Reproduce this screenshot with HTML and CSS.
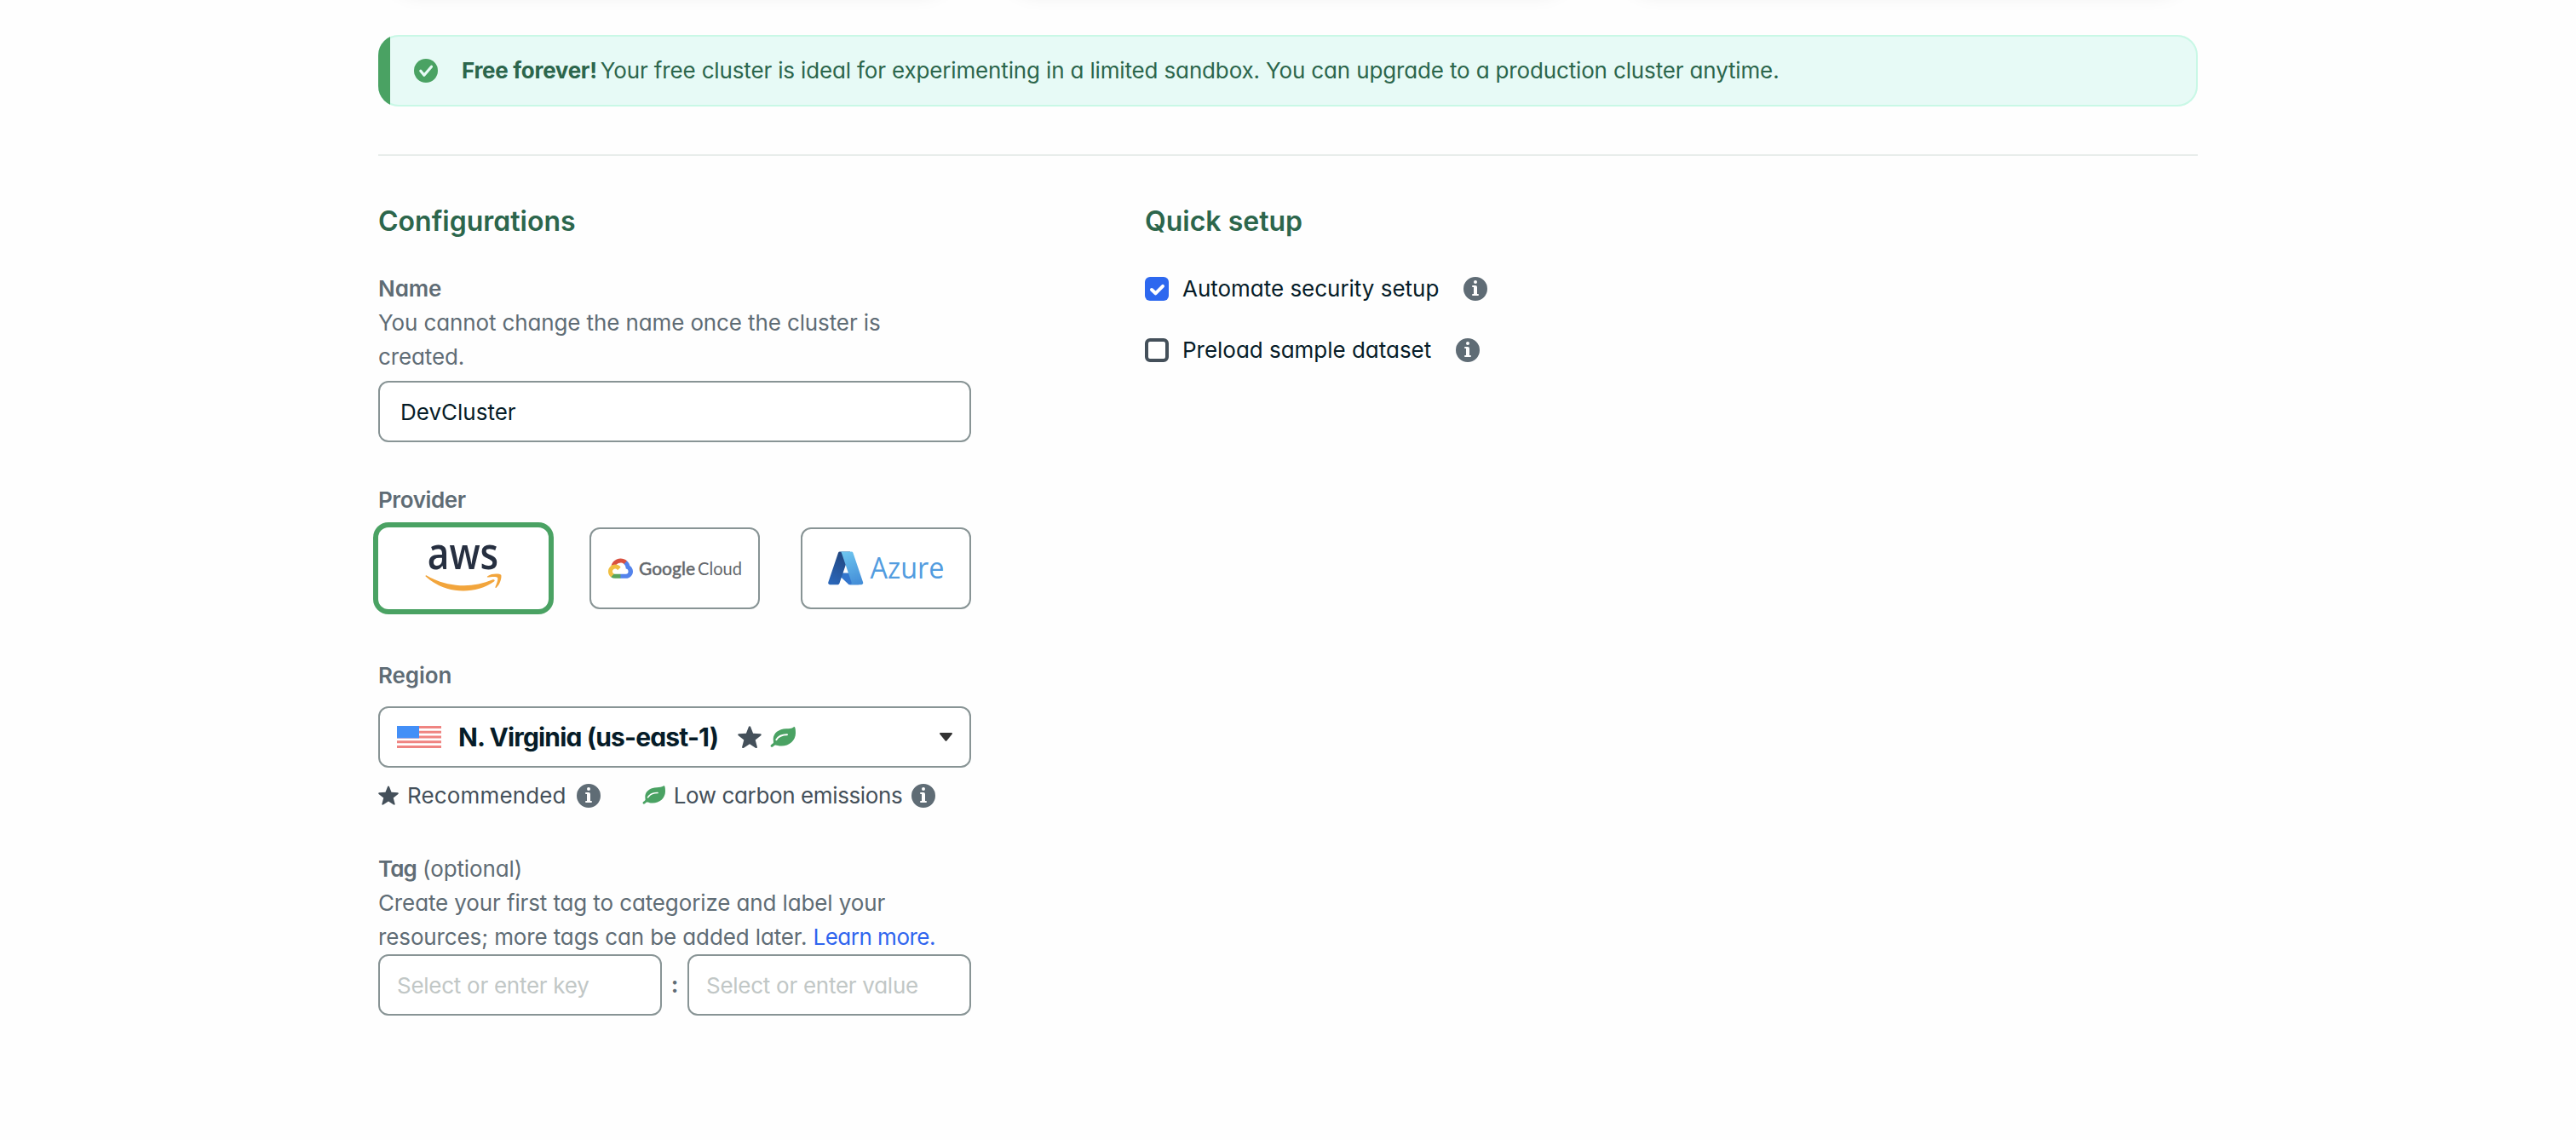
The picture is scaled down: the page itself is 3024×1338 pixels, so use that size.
FILE: index.html
```html
<!DOCTYPE html>
<html lang="en">
<head>
    <meta charset="UTF-8">
    <meta name="viewport" content="width=device-width, initial-scale=1.0">
    <title>Create a Cluster</title>
    <link rel="stylesheet" href="styles.css">
</head>
<body>
    <!-- Shared icons -->
    <svg class="sprite" aria-hidden="true">
        <symbol id="icon-info" viewBox="1 1 14 14">
            <path fill-rule="evenodd" d="M8 15A7 7 0 1 0 8 1a7 7 0 0 0 0 14ZM9 4a1 1 0 1 1-2 0 1 1 0 0 1 2 0ZM8 6a1 1 0 0 1 1 1v4h.5a.5.5 0 0 1 0 1h-3a.5.5 0 0 1 0-1H7V7h-.5a.5.5 0 0 1 0-1H8Z"/>
        </symbol>
        <symbol id="icon-star" viewBox="0 0 28 26">
            <path d="M13 .8c.4-.9 1.6-.9 2 0l3.1 7.9 8.6.6c1 .1 1.4 1.200.6 1.900l-6.600 5.300 2.200 8.200c.2 1-.8 1.700-1.700 1.200L14 21.300l-7.200 4.600c-.9.5-1.900-.2-1.700-1.200l2.200-8.200L.7 11.200C-.1 10.500.300 9.400 1.300 9.300l8.600-.6z"/>
        </symbol>
        <symbol id="icon-leaf" viewBox="0 0 30 24">
            <path d="M29.200.7c-.4-.9-1.100-.8-1.700-.3C25.500 2 22.500 2.200 19 2.300 10 2.600 3.800 7.500 3.700 14.500c0 1.800.5 3.300.2 4.300-.4 1-2 1.500-3 2.700-1 1.300.5 2.900 1.900 2.200 1.200-.7 1.700-2 3.200-2.300 1.500-.2 3.500 1.200 7.500 1.200C22.500 22.500 30 16 30 7.500 30 4.500 29.800 2.200 29.200.7Z"/>
            <path class="leaf-vein" d="M7.300 15.200C9.500 11.500 14 9.200 20 9.200"/>
        </symbol>
    </svg>

    <div class="page">
        <!-- Cluster tier cards, scrolled off the top -->
        <div class="tiers">
            <div class="tier-card"></div>
            <div class="tier-card"></div>
            <div class="tier-card"></div>
        </div>

        <div class="banner">
            <svg class="banner-icon" viewBox="0 0 28 28">
                <circle cx="14" cy="14" r="14"/>
                <path d="M7.800 14.200l4.100 5 8.600-10"/>
            </svg>
            <p class="banner-text"><b>Free forever!</b> Your free cluster is ideal for experimenting in a limited sandbox. You can upgrade to a production cluster anytime.</p>
        </div>

        <hr class="divider">

        <div class="columns">
            <form class="config">
                <h2>Configurations</h2>

                <!-- Name -->
                <div class="field field-name">
                    <label class="label" for="name">Name</label>
                    <p class="description">You cannot change the name once the cluster is created.</p>
                    <input class="input" id="name" type="text" value="DevCluster">
                </div>

                <!-- Provider -->
                <div class="field field-provider">
                    <span class="label tight">Provider</span>
                    <div class="providers">
                        <button type="button" class="provider selected" aria-label="AWS">
                            <svg class="logo-aws" viewBox="0 0 304 182">
                                <text class="aws-word" x="9" y="94" textLength="282" lengthAdjust="spacingAndGlyphs">aws</text>
                                <path fill="#f2a53c" d="M273.500 143.700c-32.900 24.300-80.700 37.200-121.800 37.200-57.600 0-109.500-21.300-148.700-56.700-3.100-2.800-.3-6.600 3.400-4.400 42.400 24.600 94.700 39.500 148.800 39.500 36.500 0 76.600-7.600 113.500-23.200 5.500-2.500 10.200 3.600 4.800 7.600z"/>
                                <path fill="#f2a53c" d="M287.200 128.100c-4.200-5.400-27.800-2.600-38.500-1.300-3.200.4-3.700-2.400-.8-4.500 18.800-13.200 49.700-9.400 53.300-5 3.600 4.500-1 35.400-18.600 50.200-2.700 2.300-5.300 1.100-4.100-1.900 4-9.900 12.900-32.200 8.700-37.500z"/>
                            </svg>
                        </button>
                        <button type="button" class="provider" aria-label="Google Cloud">
                            <svg class="logo-gcp" viewBox="0 0 156 32">
                                <g transform="translate(0 4.500) scale(.1133)">
                                    <path fill="#d95140" d="M170.250 56.820l22.250-22.250 1.490-9.370C153.440-11.680 88.980-7.500 52.420 33.920 42.270 45.420 34.730 59.760 30.720 74.570l7.970-1.120 44.500-7.340 3.440-3.510c19.800-21.750 53.270-24.670 76.130-6.170z"/>
                                    <path fill="#5383ec" d="M224.200 73.920a100.250 100.250 0 0 0-30.210-48.720l-31.230 31.230a55.520 55.520 0 0 1 20.370 44.040v5.540a27.800 27.800 0 0 1 0 55.280h-55.670l-5.460 5.930v33.340l5.460 5.240h55.670c39.930.31 72.550-31.500 72.870-71.430.18-24.200-11.750-46.890-31.800-60.450z"/>
                                    <path fill="#58a55c" d="M71.870 205.800h55.590v-44.510H71.870a27.600 27.600 0 0 1-11.400-2.500l-7.890 2.420-22.400 22.260-1.960 7.570a72.200 72.200 0 0 0 43.650 14.760z"/>
                                    <path fill="#f1bf42" d="M71.870 61.430C31.940 61.660-.24 94.230 0 134.160a72.300 72.300 0 0 0 28.220 56.880l32.250-32.250a27.800 27.800 0 1 1 36.780-36.770l32.240-32.250a72.200 72.200 0 0 0-57.620-28.340z"/>
                                </g>
                                <text class="gcp-google" x="36" y="23.500" textLength="66" lengthAdjust="spacingAndGlyphs">Google</text>
                                <text class="gcp-cloud" x="105" y="23.500" textLength="52" lengthAdjust="spacingAndGlyphs">Cloud</text>
                            </svg>
                        </button>
                        <button type="button" class="provider" aria-label="Azure">
                            <svg class="logo-azure" viewBox="0 0 136 40">
                                <defs>
                                    <linearGradient id="az-left" x1=".7" y1="0" x2=".3" y2="1">
                                        <stop offset="0" stop-color="#21457d"/>
                                        <stop offset="1" stop-color="#2a66b8"/>
                                    </linearGradient>
                                    <linearGradient id="az-right" x1=".3" y1="0" x2=".6" y2="1">
                                        <stop offset="0" stop-color="#6cc4ef"/>
                                        <stop offset="1" stop-color="#458fd8"/>
                                    </linearGradient>
                                </defs>
                                <g transform="translate(-1.700 -2.600) scale(.467)">
                                    <path fill="#3376cd" d="M71.175 60.261h-41.290a1.911 1.911 0 0 0-1.305 3.309l26.532 24.764a4.171 4.171 0 0 0 2.846 1.121h23.380z"/>
                                    <path fill="url(#az-left)" d="M33.338 6.544h26.038l-27.030 80.087a4.152 4.152 0 0 1-3.933 2.824H8.149a4.145 4.145 0 0 1-3.928-5.470L29.404 9.368a4.152 4.152 0 0 1 3.934-2.825z"/>
                                    <path fill="url(#az-right)" d="M66.595 9.364a4.145 4.145 0 0 0-3.928-2.820H33.648a4.146 4.146 0 0 1 3.928 2.820l25.184 74.620a4.146 4.146 0 0 1-3.928 5.472h29.020a4.146 4.146 0 0 0 3.927-5.472z"/>
                                </g>
                                <text class="azure-word" x="49.500" y="31.600" textLength="87" lengthAdjust="spacingAndGlyphs">Azure</text>
                            </svg>
                        </button>
                    </div>
                </div>

                <!-- Region -->
                <div class="field field-region">
                    <span class="label">Region</span>
                    <div class="select">
                        <svg class="flag" viewBox="0 0 52 26">
                            <rect width="52" height="26" fill="#fff"/>
                            <path fill="#ef8481" d="M0 0h52v2.900H0zM0 5.800h52v2.900H0zM0 11.600h52v2.900H0zM0 17.300h52v2.900H0zM0 23.100h52V26H0z"/>
                            <rect width="26" height="14.400" fill="#438ff7"/>
                        </svg>
                        <span class="region-name">N. Virginia (us-east-1)</span>
                        <svg class="star"><use href="#icon-star"/></svg>
                        <svg class="leaf"><use href="#icon-leaf"/></svg>
                        <svg class="caret" viewBox="0 0 15 10">
                            <path d="M1 0h13c.9 0 1.300.9.800 1.500L8.300 9.500c-.4.600-1.200.600-1.600 0L.2 1.500C-.3.900.100 0 1 0z"/>
                        </svg>
                    </div>
                    <div class="legend">
                        <svg class="star small"><use href="#icon-star"/></svg>
                        <span class="legend-text">Recommended</span>
                        <svg class="info"><use href="#icon-info"/></svg>
                        <svg class="leaf small"><use href="#icon-leaf"/></svg>
                        <span class="legend-text tight">Low carbon emissions</span>
                        <svg class="info"><use href="#icon-info"/></svg>
                    </div>
                </div>

                <!-- Tag -->
                <div class="field field-tag">
                    <p class="description"><b>Tag</b> (optional)</p>
                    <p class="description">Create your first tag to categorize and label your resources; more tags can be added later. <a href="#">Learn more.</a></p>
                    <div class="tag-row">
                        <input class="input" type="text" placeholder="Select or enter key">
                        <span class="colon">:</span>
                        <input class="input" type="text" placeholder="Select or enter value">
                    </div>
                </div>
            </form>

            <div class="quick-setup">
                <h2>Quick setup</h2>
                <div class="check-row">
                    <svg class="checkbox checked" viewBox="0 0 28 28">
                        <rect width="28" height="28" rx="6"/>
                        <path d="M8 15l4.500 4.300L21 10.800"/>
                    </svg>
                    <span class="check-label">Automate security setup</span>
                    <svg class="info"><use href="#icon-info"/></svg>
                </div>
                <div class="check-row">
                    <svg class="checkbox" viewBox="0 0 28 28">
                        <rect x="2" y="2" width="24" height="24" rx="4"/>
                    </svg>
                    <span class="check-label">Preload sample dataset</span>
                    <svg class="info"><use href="#icon-info"/></svg>
                </div>
            </div>
        </div>
    </div>
</body>
</html>
```
FILE: styles.css
```css
* {
    margin: 0;
    padding: 0;
    box-sizing: border-box;
}

body {
    font-family: Inter, "Liberation Sans", sans-serif;
    font-size: 26px;
    line-height: 40px;
    font-feature-settings: "cv11";
    color: #061c28;
    background: #fefefe;
    min-height: 100vh;
    overflow: hidden;
}

svg {
    display: block;
    flex-shrink: 0;
    overflow: visible;
}

.sprite {
    display: none;
}

.page {
    width: 2136px;
    margin: 0 auto;
}

/* Tier cards */
.tiers {
    display: flex;
    align-items: flex-end;
    gap: 40px;
    height: 40px;
    margin-top: -46px;
}

.tier-card {
    flex: 1;
    height: 100px;
    border-radius: 48px;
    box-shadow: 0 10px 24px -12px rgba(0, 30, 43, 0.09);
}

/* Banner */
.banner {
    display: flex;
    align-items: center;
    height: 84px;
    margin-top: 47px;
    padding-left: 42px;
    border-radius: 24px;
    background: #e7faf6;
    box-shadow: inset 0 0 0 2px #c9f8e6;
    position: relative;
    overflow: hidden;
}

/* green stripe over the left border */
.banner::before {
    content: '';
    position: absolute;
    top: 0;
    bottom: 0;
    left: 0;
    width: 14px;
    background: #4aa263;
}

.banner-icon {
    width: 28px;
    height: 28px;
    fill: #4aa263;
}

.banner-icon path {
    fill: none;
    stroke: #e7faf6;
    stroke-width: 3.2;
    stroke-linecap: round;
    stroke-linejoin: round;
}

.banner-text {
    margin-left: 28px;
    color: #2c664c;
    letter-spacing: -0.15px;
}

.banner-text b {
    margin-right: -3px;
    font-weight: 650;
    letter-spacing: -0.3px;
}

.divider {
    height: 2px;
    margin-top: 56px;
    border: none;
    background: #e8edeb;
}

/* Columns */
.columns {
    display: flex;
    gap: 204px;
    padding-top: 57px;
}

.config {
    width: 696px;
}

h2 {
    font-size: 32px;
    font-weight: 600;
    line-height: 40px;
    color: #2c664c;
}

/* Fields */
.field {
    color: #5f6c75;
}

.label {
    display: block;
    font-weight: 600;
    letter-spacing: -0.1px;
}

.label.tight {
    letter-spacing: -0.4px;
}

.description {
    letter-spacing: -0.12px;
}

.description b {
    font-weight: 600;
    letter-spacing: -0.9px;
}

.description a {
    color: #2f65ee;
    text-decoration: none;
    letter-spacing: -0.5px;
}

.input {
    display: block;
    width: 100%;
    height: 72px;
    padding: 0 24px;
    border: 2px solid #889495;
    border-radius: 12px;
    background: #fff;
    font: inherit;
    font-feature-settings: inherit;
    color: #061c28;
    outline: none;
}

.input::placeholder {
    color: #c1c7c6;
    opacity: 1;
}

.field-name {
    margin-top: 39px;
}

.field-name .input {
    margin-top: 8px;
}

/* Provider buttons */
.field-provider {
    margin-top: 48px;
}

.providers {
    display: flex;
    justify-content: space-between;
    margin-top: 12px;
}

.provider {
    display: flex;
    align-items: center;
    justify-content: center;
    width: 200px;
    height: 96px;
    border: 2px solid #889495;
    border-radius: 12px;
    background: #fff;
}

.provider.selected {
    border: none;
    box-shadow: 0 0 0 6px #4aa263;
}

.logo-aws {
    width: 90px;
    height: 54px;
}

.aws-word {
    font-family: "Open Sans", sans-serif;
    font-size: 178px;
    font-weight: 600;
    fill: #262f40;
}

.logo-gcp {
    width: 156px;
    height: 32px;
}

.gcp-google,
.gcp-cloud {
    font-family: Lato, sans-serif;
    font-size: 21.5px;
    font-weight: 500;
    fill: #64686c;
    stroke: #64686c;
    stroke-width: 0.4;
}

.gcp-cloud {
    font-weight: 400;
    stroke: none;
}

.logo-azure {
    width: 136px;
    height: 40px;
}

.azure-word {
    font-family: "Open Sans", sans-serif;
    font-size: 35px;
    fill: #529cdf;
}

/* Region */
.field-region {
    margin-top: 58px;
}

.select {
    display: flex;
    align-items: center;
    height: 72px;
    margin-top: 16px;
    padding: 0 20px;
    border: 2px solid #889495;
    border-radius: 12px;
    background: #fff;
}

.flag {
    width: 52px;
    height: 26px;
}

.region-name {
    width: 328px;
    margin-left: 20px;
    font-size: 30px;
    font-weight: 650;
    letter-spacing: -0.85px;
    white-space: nowrap;
    color: #061c28;
}

.star {
    width: 28px;
    height: 26px;
    fill: #44505a;
}

.star.small {
    width: 24px;
    height: 23px;
    margin-bottom: 2px;
}

.leaf {
    width: 30px;
    height: 24px;
    margin-left: 10px;
    fill: #4aa263;
}

.leaf.small {
    width: 27px;
    height: 22px;
    margin-left: 49px;
    margin-bottom: 2px;
}

.leaf-vein {
    fill: none;
    stroke: #fff;
    stroke-width: 1.9;
    stroke-linecap: round;
}

.caret {
    width: 15px;
    height: 10px;
    margin-left: auto;
    fill: #333;
}

.legend {
    display: flex;
    align-items: center;
    margin-top: 13px;
    color: #44505a;
}

.legend-text {
    margin: 0 12px 0 10px;
    letter-spacing: 0.15px;
}

.legend-text.tight {
    margin-right: 11px;
    letter-spacing: -0.38px;
}

.info {
    width: 28px;
    height: 28px;
    fill: #5f6c75;
}

/* Tag */
.field-tag {
    margin-top: 46px;
}

.tag-row {
    display: flex;
    align-items: center;
}

.tag-row .input {
    flex: 1;
    min-width: 0;
    padding: 0 20px;
    letter-spacing: -0.27px;
}

.colon {
    width: 30px;
    text-align: center;
    font-weight: 700;
}

/* Quick setup */
.check-row {
    display: flex;
    align-items: center;
    height: 40px;
    margin-top: 32px;
}

h2 + .check-row {
    margin-top: 39px;
}

.checkbox {
    width: 28px;
    height: 28px;
    margin-right: 16px;
    fill: #fff;
    stroke: #44505a;
    stroke-width: 4;
}

.checkbox.checked rect {
    fill: #2d68ef;
    stroke: none;
}

.checkbox.checked path {
    fill: none;
    stroke: #fff;
    stroke-linecap: round;
    stroke-linejoin: round;
}

.check-label {
    margin-right: 29px;
    letter-spacing: -0.02px;
}
```
